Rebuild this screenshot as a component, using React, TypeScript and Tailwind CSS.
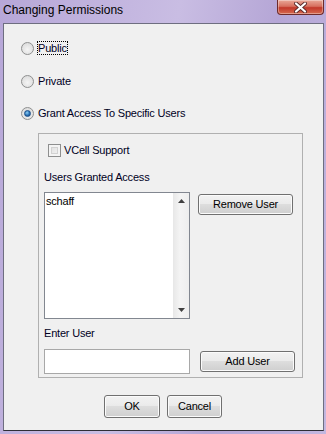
export default function App() {
  const btn =
    "flex items-center justify-center rounded-[3px] border border-[#707070] bg-[linear-gradient(#f2f2f2,#ebebeb_45%,#dddddd_50%,#cfcfcf)] shadow-[inset_0_0_0_1px_#fbfbfb] text-[11px] tracking-[-0.2px] text-[#000]";

  const Radio = ({ checked }: { checked?: boolean }) => (
    <span className="flex h-[13px] w-[13px] shrink-0 items-center justify-center rounded-full border border-[#8e8f8f] bg-[radial-gradient(circle_at_50%_60%,#f4f4f4,#d6d6d6)]">
      {checked && (
        <span className="h-[7px] w-[7px] rounded-full border border-[#1a4f8a] bg-[radial-gradient(circle_at_40%_35%,#8ed0f5,#2a73b8_55%,#123f73)]" />
      )}
    </span>
  );

  return (
    <div className="flex h-[434px] w-[326px] flex-col bg-[linear-gradient(100deg,#b7a7d8,#c9bde3_45%,#b5a6d6_70%,#c3b7e0)] font-['Liberation_Sans',Arial,sans-serif]">
      {/* title bar */}
      <div className="flex h-[23px] shrink-0 items-start justify-between">
        <span className="pl-[3px] pt-[3px] text-[12px] leading-[14px] text-[#000]">
          Changing Permissions
        </span>
        <div className="mr-[2px] flex h-[15px] w-[47px] items-center justify-center rounded-b-[4px] border border-t-0 border-[#6e2a2a] bg-[linear-gradient(#e9a898,#d7705f_45%,#c2382a_55%,#d66a50)] shadow-[inset_0_0_0_1px_rgba(255,255,255,0.35)]">
          <svg width="13" height="11" viewBox="0 0 13 11">
            <path d="M2 1.5 L11 9.5 M11 1.5 L2 9.5" stroke="#5a2a2a" strokeWidth="4" strokeLinecap="round" />
            <path d="M2 1.5 L11 9.5 M11 1.5 L2 9.5" stroke="#ffffff" strokeWidth="2.2" strokeLinecap="round" />
          </svg>
        </div>
      </div>

      {/* client area */}
      <div className="ml-[3px] mr-[2px] h-[408px] shrink-0 border border-[#6e6e80] border-b-[#2e2e36] bg-[#f0f0f0] text-[11px] tracking-[-0.2px] text-[#00001e]">
        <div className="mt-[16px] flex h-[16px] items-center gap-[4px] pl-[17px]">
          <Radio />
          <span className="-ml-px border border-dotted border-[#000] px-0 leading-[12px]">Public</span>
        </div>
        <div className="mt-[17px] flex h-[16px] items-center gap-[4px] pl-[17px]">
          <Radio />
          <span>Private</span>
        </div>
        <div className="mt-[16px] flex h-[16px] items-center gap-[4px] pl-[17px]">
          <Radio checked />
          <span>Grant Access To Specific Users</span>
        </div>

        {/* users panel */}
        <div className="ml-[34px] mt-[12px] h-[245px] w-[265px] border border-[#b0b0b0]">
          <div className="mt-[10px] flex h-[13px] items-center gap-[3px] pl-[9px]">
            <span className="h-[13px] w-[13px] border border-[#8e8f8f] bg-[linear-gradient(135deg,#dcdcdc,#f6f6f6)] shadow-[inset_0_0_0_2px_#f4f4f4,inset_0_0_0_3px_#d2d2d2]" />
            <span>VCell Support</span>
          </div>
          <div className="mt-[13px] h-[14px] pl-[5px] leading-[14px]">Users Granted Access</div>
          <div className="mt-[8px] flex items-start pl-[5px]">
            <div className="flex h-[127px] w-[146px] border border-[#828790] bg-white">
              <div className="flex-1 pl-[1px] pt-[1px] leading-[14px] text-[#000]">schaff</div>
              <div className="flex w-[16px] flex-col items-center justify-between border-l border-[#e8e8e8] bg-[linear-gradient(90deg,#e9e9e9,#f4f4f4_40%,#eeeeee)] py-[6px]">
                <svg width="7" height="4" viewBox="0 0 7 4">
                  <path d="M0 4 L3.5 0 L7 4 Z" fill="#404040" />
                </svg>
                <svg width="7" height="4" viewBox="0 0 7 4">
                  <path d="M0 0 L7 0 L3.5 4 Z" fill="#404040" />
                </svg>
              </div>
            </div>
            <button className={`${btn} ml-[8px] mt-[2px] h-[21px] w-[95px]`}>Remove User</button>
          </div>
          <div className="mt-[7px] h-[14px] pl-[5px] leading-[14px]">Enter User</div>
          <div className="mt-[9px] flex items-start pl-[5px]">
            <div className="h-[25px] w-[146px] border border-[#a8a8a8] bg-white" />
            <button className={`${btn} ml-[10px] mt-[2px] h-[21px] w-[95px]`}>Add User</button>
          </div>
        </div>

        <div className="mt-[17px] flex gap-[7px] pl-[100px]">
          <button className={`${btn} h-[23px] w-[56px]`}>OK</button>
          <button className={`${btn} h-[23px] w-[55px]`}>Cancel</button>
        </div>
      </div>
    </div>
  );
}
